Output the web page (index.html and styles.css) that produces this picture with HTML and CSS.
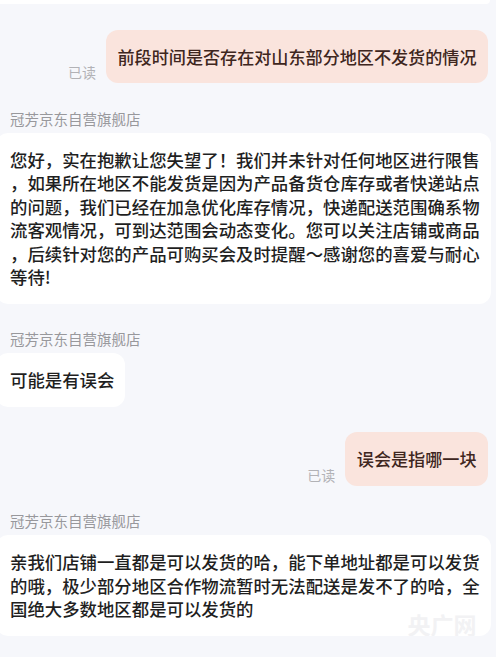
FILE: index.html
```html
<!DOCTYPE html>
<html>
<head>
<meta charset="utf-8">
<title>客服对话</title>
<link rel="stylesheet" href="styles.css">
</head>
<body>
  <div class="chat">
    <div class="prev-card"></div>

    <div class="row mine">
      <span class="read">已读</span>
      <div class="bubble out">前段时间是否存在对山东部分地区不发货的情况</div>
    </div>

    <div class="group">
      <div class="shop">冠芳京东自营旗舰店</div>
      <div class="bubble in fixed">您好，实在抱歉让您失望了！我们并未针对任何地区进行限售<br>，如果所在地区不能发货是因为产品备货仓库存或者快递站点<br>的问题，我们已经在加急优化库存情况，快递配送范围确系物<br>流客观情况，可到达范围会动态变化。您可以关注店铺或商品<br>，后续针对您的产品可购买会及时提醒～感谢您的喜爱与耐心<br>等待!</div>
    </div>

    <div class="group">
      <div class="shop">冠芳京东自营旗舰店</div>
      <div class="bubble in">可能是有误会</div>
    </div>

    <div class="row mine">
      <span class="read">已读</span>
      <div class="bubble out">误会是指哪一块</div>
    </div>

    <div class="group">
      <div class="shop">冠芳京东自营旗舰店</div>
      <div class="bubble in fixed">亲我们店铺一直都是可以发货的哈，能下单地址都是可以发货<br>的哦，极少部分地区合作物流暂时无法配送是发不了的哈，全<br>国绝大多数地区都是可以发货的<span class="mark">央广网</span></div>
    </div>
  </div>
</body>
</html>
```

FILE: styles.css
```css
body {
  margin: 0;
  background-color: #f6f7fb;
  font-family: "Noto Sans CJK SC", "Noto Sans", sans-serif;
  overflow: hidden;
}
.chat {
  display: flex;
  flex-direction: column;
  gap: 25.5px;
}
.prev-card {
  height: 4px;
  width: 494px;
  margin-left: -4px;
  background-color: #ffffff;
  border-radius: 0 0 12px 12px;
}
.row.mine {
  display: flex;
  justify-content: flex-end;
  align-items: flex-end;
  gap: 10px;
  padding-right: 8px;
}
.read {
  font-size: 14px;
  line-height: 18px;
  color: #b2b2b6;
  margin-bottom: 2px;
}
.group {
  display: flex;
  flex-direction: column;
  align-items: flex-start;
  gap: 4px;
}
.shop {
  padding-left: 10px;
  font-size: 14.5px;
  line-height: 20px;
  color: #98989c;
}
.bubble {
  border-radius: 12px;
  line-height: 23.5px;
  font-weight: 500;
}
.bubble.out {
  background-color: #fae4dd;
  color: #3e2620;
  font-size: 17.1px;
  padding: 15px 11.5px;
}
.bubble.in {
  position: relative;
  background-color: #ffffff;
  color: #1f1f1f;
  font-size: 17.4px;
  margin-left: -4px;
  padding: 15px 11px 15px 14px;
}
.bubble.fixed {
  white-space: nowrap;
}
.mark {
  position: absolute;
  right: 14px;
  bottom: 0;
  font-size: 23px;
  font-weight: bold;
  line-height: 24px;
  color: #f2f2f4;
}
```
